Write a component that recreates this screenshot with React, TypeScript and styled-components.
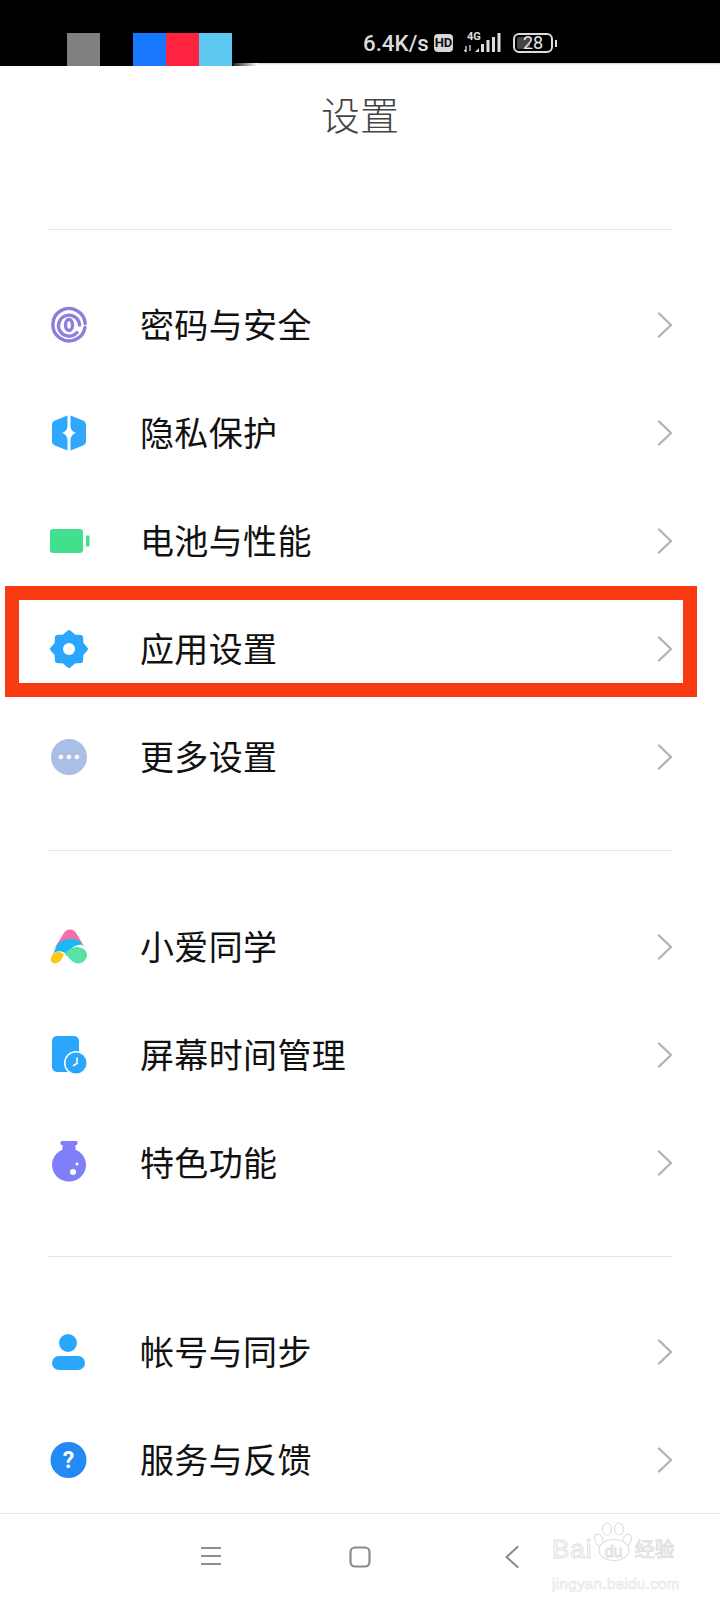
import React from "react";
import styled, { createGlobalStyle } from "styled-components";

const CJK = `"Noto Sans CJK SC", "Noto Sans", sans-serif`;

const Global = createGlobalStyle`
  html, body {
    margin: 0;
    padding: 0;
    background: #fff;
    font-family: ${CJK};
  }
`;

const Page = styled.div`
  width: 720px;
  height: 1600px;
  display: flex;
  flex-direction: column;
  background: #fff;
  overflow: hidden;
`;

const StatusBar = styled.div`
  height: 66px;
  display: flex;
  align-items: flex-start;
  flex-shrink: 0;
`;

const StatusLeft = styled.div`
  width: 233px;
  height: 66px;
  padding: 33px 0 0 67px;
  box-sizing: border-box;
  background: #000;
  display: flex;
`;

const StatusFade = styled.div`
  width: 25px;
  height: 66px;
  background: linear-gradient(#000 63px, transparent 63px),
    linear-gradient(to right, #222, #fff);
`;

const Swatch = styled.div<{ $color: string; $gap?: number }>`
  width: 33px;
  height: 33px;
  background: ${(p) => p.$color};
  margin-left: ${(p) => p.$gap ?? 0}px;
`;

const StatusRight = styled.div`
  flex: 1;
  height: 65px;
  background: linear-gradient(#000 63px, #ccc 63px, #fff 65px);
  display: flex;
  align-items: flex-start;
  padding: 33px 0 0 105px;
  box-sizing: border-box;
`;

const Speed = styled.div`
  width: 65px;
  font-family: Roboto, sans-serif;
  font-size: 22.3px;
  font-weight: 500;
  line-height: 20px;
  color: #dcdcdc;
  white-space: nowrap;
`;

const HdBadge = styled.div`
  width: 19px;
  height: 18px;
  margin: 1px 0 0 6px;
  border-radius: 4px;
  background: #d8d8d8;
  color: #111;
  font-family: Roboto, sans-serif;
  font-size: 13px;
  font-weight: 700;
  line-height: 18px;
  text-align: center;
`;

const Network = styled.div`
  position: relative;
  width: 38px;
  height: 20px;
  margin-left: 11px;
`;

const NetLabel = styled.span`
  position: absolute;
  left: 3px;
  top: -1px;
  font-family: Roboto, sans-serif;
  font-size: 11px;
  font-weight: 700;
  line-height: 10px;
  color: #e0e0e0;
`;

const Battery = styled.div`
  width: 40px;
  height: 20px;
  margin-left: 11px;
  border: 2px solid #ddd;
  border-radius: 6px;
  box-sizing: border-box;
  padding: 2px;
  position: relative;
  display: flex;
`;

const BatteryFill = styled.div`
  width: 13px;
  border-radius: 2px;
  background: #444;
`;

const BatteryText = styled.span`
  position: absolute;
  left: 0;
  right: 0;
  top: 0;
  text-align: center;
  font-family: Roboto, sans-serif;
  font-size: 18px;
  line-height: 16px;
  color: #e4e4e4;
`;

const BatteryNib = styled.div`
  width: 2px;
  height: 7px;
  margin: 7px 0 0 2px;
  background: #ddd;
`;

const Header = styled.header`
  height: 163px;
  box-sizing: border-box;
  padding-top: 22px;
  text-align: center;
  flex-shrink: 0;
`;

const Title = styled.h1`
  margin: 0;
  font-size: 39px;
  font-weight: 300;
  line-height: 50px;
  color: #444;
`;

const Divider = styled.div`
  height: 1px;
  margin: 0 47px 0 47px;
  background: #e6e6e6;
  flex-shrink: 0;
`;

const Group = styled.section<{ $top: number; $bottom: number }>`
  padding: ${(p) => p.$top}px 0 ${(p) => p.$bottom}px;
  flex-shrink: 0;
`;

const Row = styled.div`
  position: relative;
  height: 108px;
  display: flex;
  align-items: center;
  padding: 0 47px 0 49px;
`;

const IconSlot = styled.div`
  width: 40px;
  height: 40px;
  margin-top: 2px;
  flex-shrink: 0;
  svg {
    display: block;
    overflow: visible;
  }
`;

const Label = styled.span`
  flex: 1;
  margin-left: 51px;
  font-size: 34px;
  line-height: 46px;
  letter-spacing: 0.35px;
  color: #111;
`;

const ChevronSlot = styled.div`
  margin-top: 2px;
  svg {
    display: block;
  }
`;

const Highlight = styled.div`
  position: absolute;
  left: 5px;
  top: -8px;
  width: 692px;
  height: 111px;
  box-sizing: border-box;
  border: 14px solid #f93a11;
`;

const NavBar = styled.nav`
  position: relative;
  flex: 1;
  border-top: 1px solid #e6e6e6;
  display: flex;
  align-items: flex-start;
  padding: 32px 0 0 200px;
`;

const NavItem = styled.div<{ $gap: number }>`
  margin-left: ${(p) => p.$gap}px;
  svg {
    display: block;
  }
`;

const Watermark = styled.div`
  position: absolute;
  left: 552px;
  top: 8px;
  width: 130px;
  color: #fff;
  -webkit-text-stroke: 1px #e0e0e0;
`;

const MarkTop = styled.div`
  display: flex;
  align-items: flex-end;
  height: 39px;
`;

const MarkBai = styled.span`
  font-family: "Liberation Sans", sans-serif;
  font-size: 26px;
  line-height: 24px;
  font-weight: 400;
  letter-spacing: 1px;
`;

const MarkPaw = styled.div`
  position: relative;
  width: 40px;
  height: 39px;
  flex-shrink: 0;
`;

const MarkDu = styled.span`
  position: absolute;
  left: 8px;
  bottom: 1px;
  width: 26px;
  text-align: center;
  font-family: "Liberation Sans", sans-serif;
  font-size: 16px;
  line-height: 16px;
  font-weight: 400;
`;

const MarkJy = styled.span`
  font-size: 20px;
  line-height: 24px;
  font-weight: 400;
  white-space: nowrap;
  margin-left: 2px;
`;

const MarkUrl = styled.div`
  margin-top: 14px;
  font-family: "Liberation Sans", sans-serif;
  font-size: 15px;
  line-height: 18px;
  letter-spacing: 0.4px;
  white-space: nowrap;
  -webkit-text-stroke: 0.7px #e6e6e6;
`;

const Icon = ({ children }: { children: React.ReactNode }) => (
  <IconSlot>
    <svg width="40" height="40" viewBox="0 0 40 40">
      {children}
    </svg>
  </IconSlot>
);

const FingerprintIcon = () => (
  <Icon>
    <g fill="none" stroke="#8a7fdc" strokeWidth="3.400" strokeLinecap="round">
      <path d="M36 22.500A16.200 16.200 0 1 1 36.200 18.500" />
      <path d="M28 27.500A10.500 10.500 0 1 1 30.500 20" />
      <ellipse cx="20" cy="20" rx="3.500" ry="5.500" />
    </g>
  </Icon>
);

const ShieldIcon = () => (
  <Icon>
    <path d="M18.500 2.500v11.300c-.5 3.200-2.500 5.400-5.500 6.200 3 .8 5 3 5.500 6.200v11.300L6 32.500c-1.800-.8-3-2-3-4V11.500c0-2 1.200-3.200 3-4z" fill="#2fa7fd" />
    <path d="M21.500 2.500v11.300c.5 3.200 2.500 5.400 5.500 6.200-3 .8-5 3-5.500 6.200v11.300L34 32.500c1.800-.8 3-2 3-4V11.500c0-2-1.200-3.200-3-4z" fill="#2fa7fd" />
  </Icon>
);

const BatteryIcon = () => (
  <Icon>
    <rect x="1" y="8" width="33" height="24" rx="3" fill="#41e08e" />
    <rect x="37" y="14.500" width="3.500" height="11" rx="1" fill="#41e08e" />
  </Icon>
);

const GearIcon = () => (
  <Icon>
    <polygon
      points="37,20 32.500,14.800 32,8 25.200,7.500 20,3 14.800,7.500 8,8 7.500,14.800 3,20 7.500,25.200 8,32 14.800,32.500 20,37 25.200,32.500 32,32 32.500,25.200"
      fill="#2ba6fd"
      stroke="#2ba6fd"
      strokeWidth="4"
      strokeLinejoin="round"
    />
    <circle cx="20" cy="20" r="6" fill="#fff" />
  </Icon>
);

const MoreIcon = () => (
  <Icon>
    <circle cx="20" cy="20" r="18" fill="#a9bfe8" />
    <circle cx="12" cy="20" r="2.300" fill="#fff" />
    <circle cx="20" cy="20" r="2.300" fill="#fff" />
    <circle cx="28" cy="20" r="2.300" fill="#fff" />
  </Icon>
);

const XiaoaiIcon = () => (
  <Icon>
    <path d="M21 2.500c-3.500 0-5.500 2-7 5L5 22c5-6 12-9 16-9 5 0 11 2 15 8L28 7.500C26.500 4.500 24.500 2.500 21 2.500z" fill="#f56ea6" />
    <path d="M4 27l4-9c3-4 9-6 14-6 4 0 9 1 12 6-5-1-10 1-14 6l-3 3c-3-3-9-4-13 0z" fill="#1cb8f5" />
    <path d="M16 27c3-5 8-7 12-7 6 0 10 4 10 8 0 5-5 8.500-9 8.500-3 0-5-1.500-7-3.500z" fill="#58e2a6" />
    <path d="M2 31c1-4 4-6 7-6s5 1 6 3l-3 5c-2 3-6 4-8 3-2-1-3-3-2-5z" fill="#fdc913" />
  </Icon>
);

const ScreenTimeIcon = () => (
  <Icon>
    <rect x="3" y="1" width="27" height="36" rx="5" fill="#2ba6fd" />
    <circle cx="27" cy="28" r="12" fill="#fff" />
    <circle cx="27" cy="28" r="10.500" fill="#2ba6fd" />
    <path d="M28 23v5.500l-3.500 2" fill="none" stroke="#fff" strokeWidth="1.600" strokeLinecap="round" strokeLinejoin="round" />
  </Icon>
);

const FlaskIcon = () => (
  <Icon>
    <rect x="11.500" y="-2" width="17" height="4" rx="1.500" fill="#7f7ffa" />
    <path d="M13.500 1h13v9h-13z" fill="#7f7ffa" />
    <ellipse cx="20" cy="22" rx="17" ry="16.500" fill="#7f7ffa" />
    <circle cx="24" cy="29" r="3" fill="#fff" />
    <circle cx="28" cy="21" r="1.500" fill="#fff" />
  </Icon>
);

const AccountIcon = () => (
  <Icon>
    <circle cx="19" cy="11" r="9" fill="#2ba6fd" />
    <rect x="3" y="24" width="33" height="14" rx="7" fill="#2ba6fd" />
  </Icon>
);

const HelpIcon = () => (
  <Icon>
    <circle cx="19.500" cy="20" r="18" fill="#2389f5" />
    <text x="19.500" y="28" textAnchor="middle" fontFamily="Roboto, sans-serif" fontSize="23" fontWeight="700" fill="#fff">
      ?
    </text>
  </Icon>
);

const Chevron = () => (
  <ChevronSlot>
    <svg width="16" height="26" viewBox="0 0 16 26" fill="none">
      <path d="M2 1.500 14 13 2 24.500" stroke="#b3b3b3" strokeWidth="2.400" strokeLinecap="round" strokeLinejoin="round" />
    </svg>
  </ChevronSlot>
);

type Item = { label: string; icon: React.ReactNode; marked?: boolean };

const groups: { top: number; bottom: number; items: Item[] }[] = [
  {
    top: 40,
    bottom: 40,
    items: [
      { label: "密码与安全", icon: <FingerprintIcon /> },
      { label: "隐私保护", icon: <ShieldIcon /> },
      { label: "电池与性能", icon: <BatteryIcon /> },
      { label: "应用设置", icon: <GearIcon />, marked: true },
      { label: "更多设置", icon: <MoreIcon /> },
    ],
  },
  {
    top: 41,
    bottom: 40,
    items: [
      { label: "小爱同学", icon: <XiaoaiIcon /> },
      { label: "屏幕时间管理", icon: <ScreenTimeIcon /> },
      { label: "特色功能", icon: <FlaskIcon /> },
    ],
  },
  {
    top: 40,
    bottom: 0,
    items: [
      { label: "帐号与同步", icon: <AccountIcon /> },
      { label: "服务与反馈", icon: <HelpIcon /> },
    ],
  },
];

export default function App() {
  return (
    <Page>
      <Global />
      <StatusBar>
        <StatusLeft>
          <Swatch $color="#808080" />
          <Swatch $color="#1777ff" $gap={33} />
          <Swatch $color="#ff2340" />
          <Swatch $color="#5cc8f2" />
        </StatusLeft>
        <StatusFade />
        <StatusRight>
          <Speed>6.4K/s</Speed>
          <HdBadge>HD</HdBadge>
          <Network>
            <NetLabel>4G</NetLabel>
            <svg width="38" height="20" viewBox="0 0 38 20">
              <path d="M2 13v6M0.500 17l1.500 2M6 12v6" stroke="#ddd" strokeWidth="1.300" fill="none" />
              <path d="M11 19l4-4v4z" fill="#ddd" />
              <rect x="17" y="11" width="3" height="8" fill="#ddd" />
              <rect x="22.500" y="7" width="3" height="12" fill="#ddd" />
              <rect x="28" y="4" width="3" height="15" fill="#ddd" />
              <rect x="33.500" y="0" width="3" height="19" fill="#ddd" />
            </svg>
          </Network>
          <Battery>
            <BatteryFill />
            <BatteryText>28</BatteryText>
          </Battery>
          <BatteryNib />
        </StatusRight>
      </StatusBar>
      <Header>
        <Title>设置</Title>
      </Header>
      {groups.map((group, i) => (
        <React.Fragment key={i}>
          <Divider />
          <Group $top={group.top} $bottom={group.bottom}>
            {group.items.map((item) => (
              <Row key={item.label}>
                {item.icon}
                <Label>{item.label}</Label>
                <Chevron />
                {item.marked && <Highlight />}
              </Row>
            ))}
          </Group>
        </React.Fragment>
      ))}
      <NavBar>
        <NavItem $gap={0}>
          <svg width="22" height="20" viewBox="0 0 22 20">
            <path d="M1 2h20M1 10h20M1 18h20" stroke="#8e8e8e" strokeWidth="2" />
          </svg>
        </NavItem>
        <NavItem $gap={127}>
          <svg width="22" height="22" viewBox="0 0 22 22">
            <rect x="1.500" y="1.500" width="19" height="19" rx="4.500" fill="none" stroke="#8a8a8a" strokeWidth="2.200" />
          </svg>
        </NavItem>
        <NavItem $gap={134}>
          <svg width="14" height="22" viewBox="0 0 14 22">
            <path d="M12.500 1 1.500 11l11 10" fill="none" stroke="#8a8a8a" strokeWidth="2" strokeLinecap="round" strokeLinejoin="round" />
          </svg>
        </NavItem>
        <Watermark>
          <MarkTop>
            <MarkBai>Bai</MarkBai>
            <MarkPaw>
              <svg width="40" height="39" viewBox="0 0 40 39" fill="#fff" stroke="#e0e0e0" strokeWidth="1.200">
                <ellipse cx="6" cy="18" rx="4" ry="6" transform="rotate(-20 6 18)" />
                <ellipse cx="14" cy="7" rx="4.500" ry="6" />
                <ellipse cx="26" cy="7" rx="4.500" ry="6" />
                <ellipse cx="34" cy="18" rx="4" ry="6" transform="rotate(20 34 18)" />
                <ellipse cx="21" cy="28" rx="15" ry="10.500" />
              </svg>
              <MarkDu>du</MarkDu>
            </MarkPaw>
            <MarkJy>经验</MarkJy>
          </MarkTop>
          <MarkUrl>jingyan.baidu.com</MarkUrl>
        </Watermark>
      </NavBar>
    </Page>
  );
}
